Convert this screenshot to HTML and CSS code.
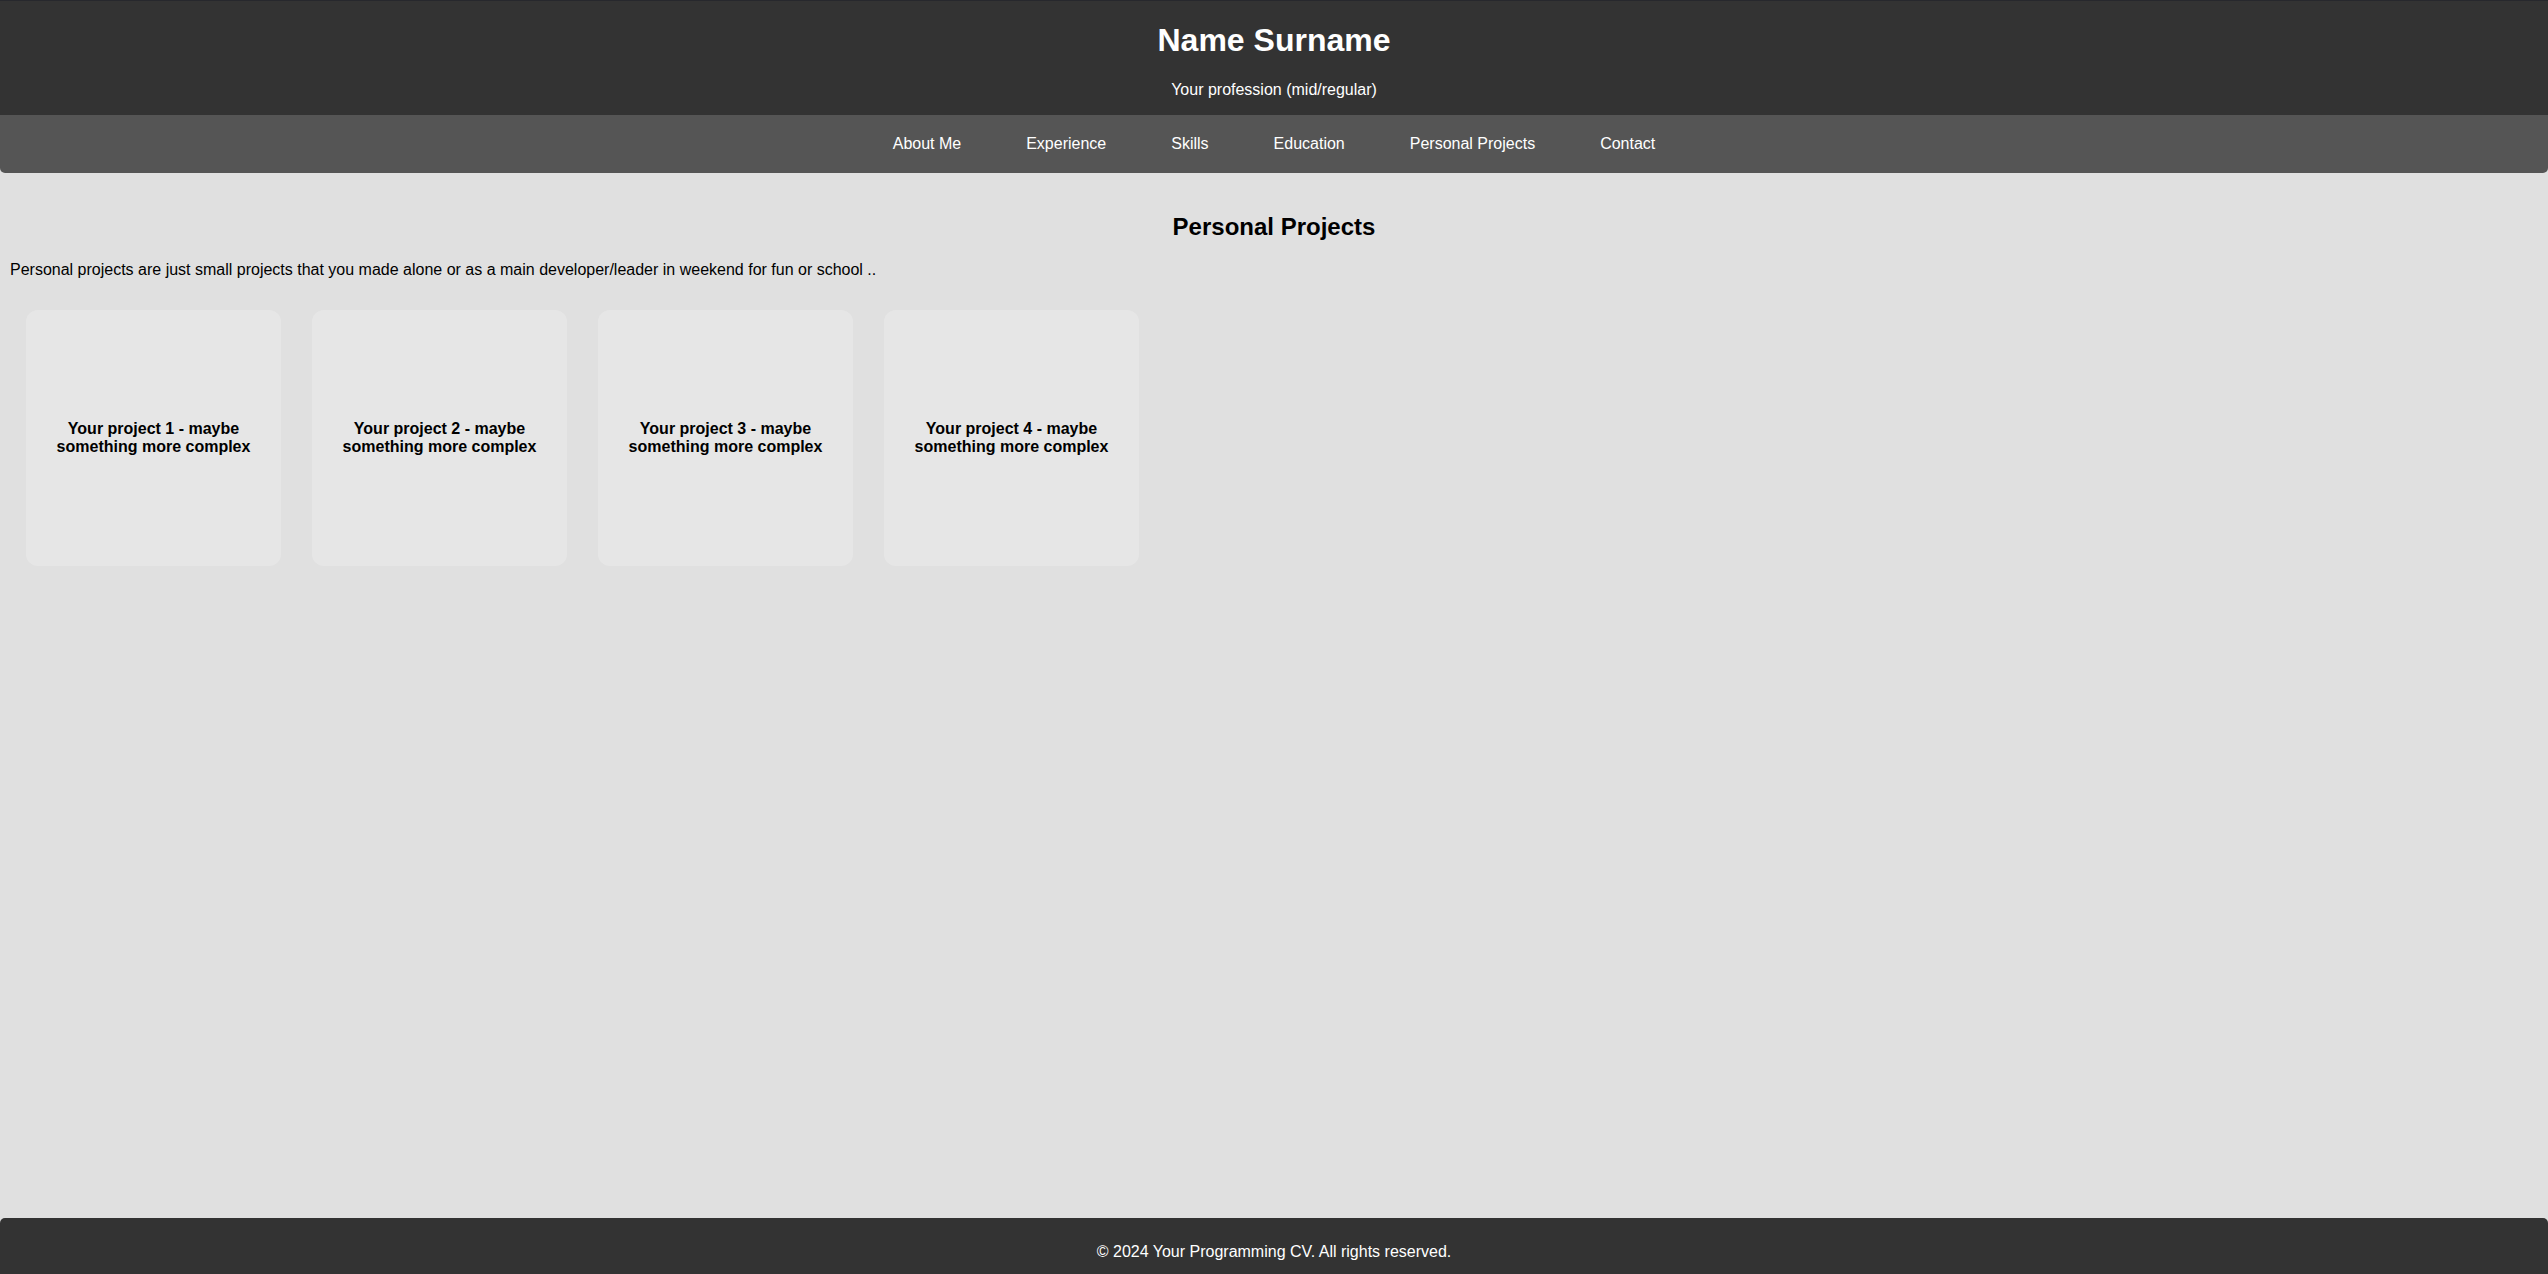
FILE: index.html
```html
<!DOCTYPE html>
<html lang="en">
<head>
<meta charset="utf-8">
<title>Your Programming CV</title>
<link rel="stylesheet" href="styles.css">
</head>
<body>
<header class="site-header">
  <h1 class="name">Name Surname</h1>
  <p class="profession">Your profession (mid/regular)</p>
</header>
<nav class="main-nav">
  <a href="#about">About Me</a>
  <a href="#experience">Experience</a>
  <a href="#skills">Skills</a>
  <a href="#education">Education</a>
  <a href="#projects">Personal Projects</a>
  <a href="#contact">Contact</a>
</nav>
<main class="content">
  <section class="projects" id="projects">
    <h2 class="section-title">Personal Projects</h2>
    <p class="section-intro">Personal projects are just small projects that you made alone or as a main developer/leader in weekend for fun or school ..</p>
    <div class="project-list">
      <div class="project-card"><h3>Your project 1 - maybe something more complex</h3></div>
      <div class="project-card"><h3>Your project 2 - maybe something more complex</h3></div>
      <div class="project-card"><h3>Your project 3 - maybe something more complex</h3></div>
      <div class="project-card"><h3>Your project 4 - maybe something more complex</h3></div>
    </div>
  </section>
</main>
<footer class="site-footer">
  <p>&copy; 2024 Your Programming CV. All rights reserved.</p>
</footer>
</body>
</html>
```
FILE: styles.css
```css
html, body {
  margin: 0;
  padding: 0;
}

body {
  font-family: "Liberation Sans", Arial, sans-serif;
  font-size: 16px;
  background: #e0e0e0;
  color: #000;
  min-height: 100vh;
  display: flex;
  flex-direction: column;
}

.site-header {
  background: #333333;
  color: #fff;
  text-align: center;
  border-top: 1px solid #27282d;
  display: flow-root;
}

.name {
  font-size: 32px;
  font-weight: bold;
  margin: 21.4px 0;
}

.profession {
  margin: 16px 0;
}

.main-nav {
  background: #555555;
  display: flex;
  justify-content: center;
  gap: 65px;
  padding: 20px 0;
  height: 18px;
  line-height: 18px;
  border-radius: 0 0 5px 5px;
}

.main-nav a {
  color: #fff;
  text-decoration: none;
}

.content {
  flex: 1;
  padding: 20px 10px 0;
}

.section-title {
  text-align: center;
  font-size: 24px;
  margin: 19.9px 0;
}

.section-intro {
  margin: 16px 0 0;
}

.project-list {
  display: flex;
  gap: 31px;
  padding: 31px 16px 15px;
}

.project-card {
  width: 255px;
  height: 256px;
  background: #e6e6e6;
  border-radius: 12px;
  display: flex;
  align-items: center;
  justify-content: center;
  text-align: center;
  padding: 0 20px;
  box-sizing: border-box;
}

.project-card h3 {
  font-size: 16px;
  margin: 0;
  line-height: 18px;
}

.site-footer {
  background: #333333;
  color: #fff;
  text-align: center;
  height: 56px;
  box-sizing: border-box;
  padding-top: 25px;
  border-radius: 5px 5px 0 0;
}

.site-footer p {
  margin: 0;
}
```
